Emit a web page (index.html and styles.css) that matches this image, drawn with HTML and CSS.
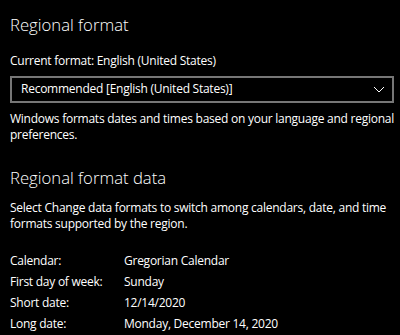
FILE: index.html
```html
<!DOCTYPE html>
<html lang="en">

<head>
    <meta charset="UTF-8">
    <title>Region</title>
    <link rel="stylesheet" href="styles.css">
</head>

<body>
    <main class="page">
        <section class="group">
            <h2 class="group-title">Regional format</h2>
            <p class="field-label">Current format: English (United States)</p>
            <div class="select">
                <span class="select-text">Recommended [English (United States)]</span>
                <svg class="chevron" width="12" height="7" viewBox="0 0 12 7">
                    <path d="M1 1 L6 6 L11 1" fill="none" stroke="#fff" stroke-width="1"/>
                </svg>
            </div>
            <p class="note">Windows formats dates and times based on your language and regional preferences.</p>
        </section>

        <section class="group">
            <h2 class="group-title">Regional format data</h2>
            <p class="note">Select Change data formats to switch among calendars, date, and time formats supported by the region.</p>
            <dl class="data">
                <div class="data-row"><dt>Calendar:</dt><dd>Gregorian Calendar</dd></div>
                <div class="data-row"><dt>First day of week:</dt><dd>Sunday</dd></div>
                <div class="data-row"><dt>Short date:</dt><dd>12/14/2020</dd></div>
                <div class="data-row"><dt>Long date:</dt><dd>Monday, December 14, 2020</dd></div>
            </dl>
        </section>
    </main>
</body>

</html>
```

FILE: styles.css
```css
* {
    margin: 0;
    padding: 0;
}

html,
body {
    background: #000;
}

body {
    color: #fff;
    font-family: "Open Sans", "Noto Sans", sans-serif;
    font-size: 12px;
    letter-spacing: -0.25px;
}

.page {
    padding: 13px 2px 0 10px;
}

.group-title {
    font-size: 16.7px;
    font-weight: 350;
    line-height: 24px;
    letter-spacing: 0;
}

.field-label {
    line-height: 16px;
    margin-top: 16px;
}

.select {
    display: flex;
    align-items: center;
    justify-content: space-between;
    height: 27px;
    box-sizing: border-box;
    margin: 7px 4px 0 0;
    padding: 0 7px 2px 9px;
    border: 2px solid #767676;
}

.select-text {
    line-height: 21px;
}

.chevron {
    margin-top: 2px;
}

.note {
    line-height: 15.5px;
    margin-top: 8px;
}

.group + .group {
    margin-top: 24px;
}

.group + .group .note {
    margin-top: 10px;
}

.data {
    margin-top: 19px;
}

.data-row {
    display: flex;
    line-height: 21px;
}

.data-row dt {
    width: 114px;
}
```
